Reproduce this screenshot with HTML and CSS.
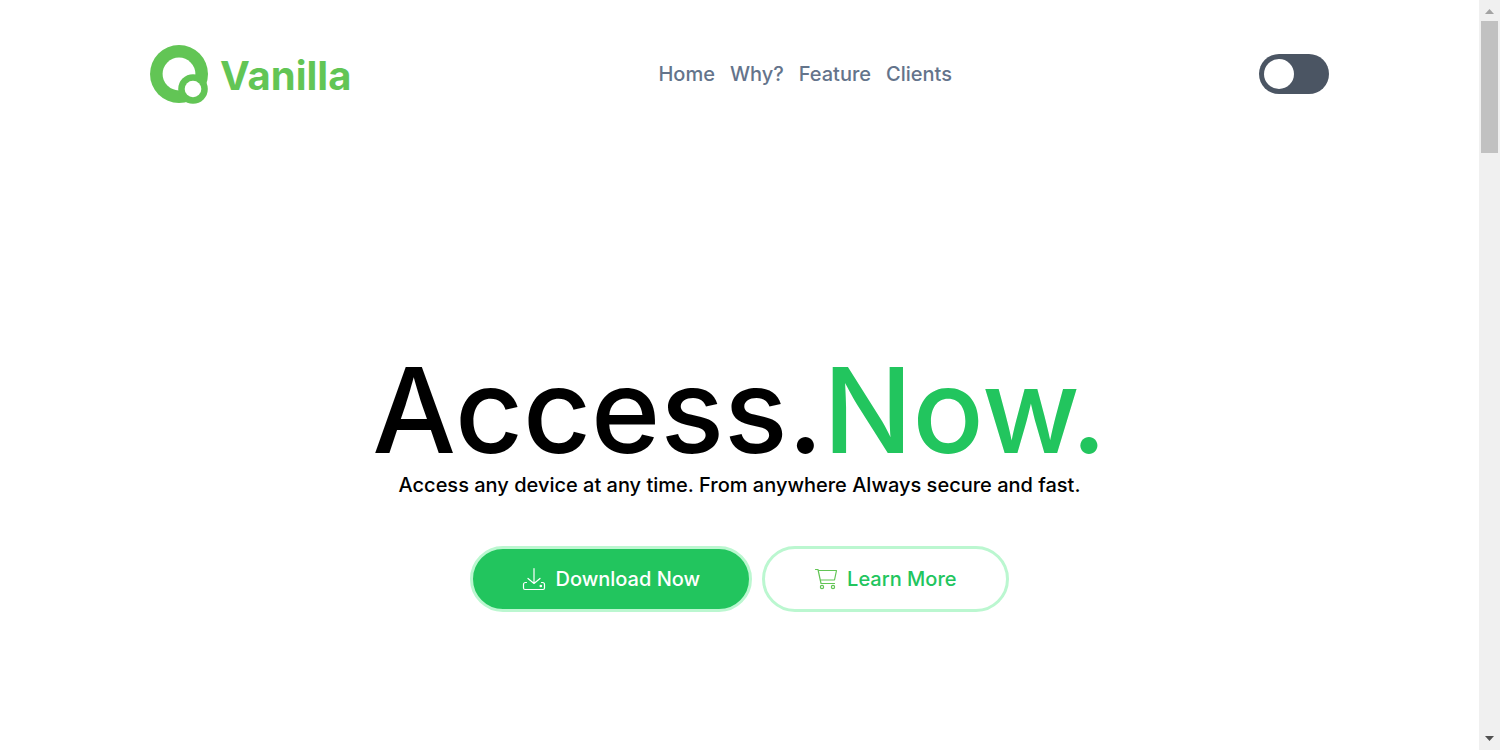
FILE: index.html
```html
<!DOCTYPE html>
<html lang="en">
<head>
<meta charset="utf-8">
<meta name="viewport" content="width=device-width, initial-scale=1">
<title>Vanilla</title>
<link rel="stylesheet" href="styles.css">
</head>
<body>
<div class="page">
  <header class="header">
    <a class="logo" href="#">
      <svg class="logo-mark" viewBox="0 0 58 60" aria-hidden="true">
        <circle cx="29" cy="30" r="29" fill="#62c555"/>
        <circle cx="29" cy="30" r="16.400" fill="#fff"/>
        <circle cx="43" cy="45" r="14.800" fill="#62c555"/>
        <circle cx="43" cy="45" r="8.300" fill="#fff"/>
      </svg>
      <span class="logo-name">Vanilla</span>
    </a>
    <nav class="nav">
      <a href="#home">Home</a>
      <a href="#why">Why?</a>
      <a href="#feature">Feature</a>
      <a href="#clients">Clients</a>
    </nav>
    <input class="switch" type="checkbox" role="switch" aria-label="Dark mode">
  </header>
  <main class="hero">
    <h1 class="title">Access.<span class="accent">Now.</span></h1>
    <p class="tagline">Access any device at any time. From anywhere Always secure and fast.</p>
    <div class="actions">
      <button class="button primary" type="button">
        <svg class="icon" viewBox="0 0 24 24" fill="none" stroke="#fff" stroke-width="1.2" stroke-linecap="round" stroke-linejoin="round" aria-hidden="true">
          <path d="M12 1.500V16M6 11.500l6 5 6-5M4.500 15.500H3.500a2 2 0 0 0-2 2V21a1.500 1.500 0 0 0 1.500 1.500h18a1.500 1.500 0 0 0 1.500-1.500v-3.500a2 2 0 0 0-2-2h-1"/>
          <circle cx="18.800" cy="19" r=".7" fill="#fff"/>
        </svg>
        Download Now
      </button>
      <button class="button outline" type="button">
        <svg class="icon" viewBox="0 0 24 24" fill="none" stroke="#62c555" stroke-width="1.2" stroke-linecap="round" stroke-linejoin="round" aria-hidden="true">
          <path d="M1.500 2.500h2.500l3 14h13.500M4.200 3.500h18.300L20.500 13H6.300"/>
          <circle cx="8" cy="20" r="1.600"/>
          <circle cx="19" cy="20" r="1.600"/>
        </svg>
        Learn More
      </button>
    </div>
  </main>
</div>
<div class="scrollbar" aria-hidden="true">
  <svg class="arrow" viewBox="0 0 21 21"><path d="M6 14h9l-4.500-5z" fill="#a3a3a3"/></svg>
  <div class="track"><div class="thumb"></div></div>
  <svg class="arrow" viewBox="0 0 21 21"><path d="M6 7h9l-4.500 5z" fill="#505050"/></svg>
</div>
</body>
</html>
```
FILE: styles.css
```css
* { box-sizing: border-box; }
body {
  margin: 0;
  min-height: 100vh;
  display: flex;
  background: #fff;
  color: #000;
  font-family: Inter, "Liberation Sans", sans-serif;
  font-weight: 500;
  font-size: 20px;
  line-height: 30px;
}
.page {
  flex: 1;
  min-width: 0;
  display: flex;
  flex-direction: column;
}
.header {
  display: flex;
  align-items: center;
  justify-content: space-between;
  padding: 44px 150px;
}
.logo {
  display: flex;
  align-items: center;
  gap: 12px;
  color: #62c555;
  text-decoration: none;
}
.logo-mark { width: 58px; height: 60px; }
.logo-name {
  padding-top: 4px;
  font-size: 40px;
  line-height: 48px;
  font-weight: 700;
}
.nav { display: flex; gap: 15px; }
.nav a { color: #64748b; text-decoration: none; }
.switch {
  appearance: none;
  display: flex;
  width: 70px;
  height: 40px;
  margin: 0;
  padding: 5px;
  border-radius: 20px;
  background: #4b5563;
  cursor: pointer;
}
.switch::before {
  content: "";
  width: 30px;
  height: 30px;
  border-radius: 50%;
  background: #fff;
}
.switch:checked { justify-content: flex-end; }
.hero {
  flex: 1;
  display: flex;
  flex-direction: column;
  align-items: center;
  justify-content: center;
  padding-top: 64px;
}
.title {
  margin: 0;
  font-size: 118px;
  line-height: 120px;
  font-weight: 500;
}
.accent { color: #22c55e; }
.tagline { margin: 0; }
.actions {
  display: flex;
  gap: 10px;
  margin-top: 46px;
}
.button {
  display: flex;
  align-items: center;
  gap: 9px;
  height: 66px;
  padding: 0 49px;
  border: 3px solid #bbf7d0;
  border-radius: 33px;
  font: inherit;
  cursor: pointer;
}
.primary { background: #22c55e; color: #fff; }
.outline { background: #fff; color: #22c55e; }
.icon { width: 24px; height: 24px; }
.scrollbar {
  width: 21px;
  display: flex;
  flex-direction: column;
  background: #f0f0f0;
}
.arrow { width: 21px; height: 21px; }
.track { flex: 1; padding: 0 2px; }
.thumb { height: 132px; background: #c1c1c1; }
```
